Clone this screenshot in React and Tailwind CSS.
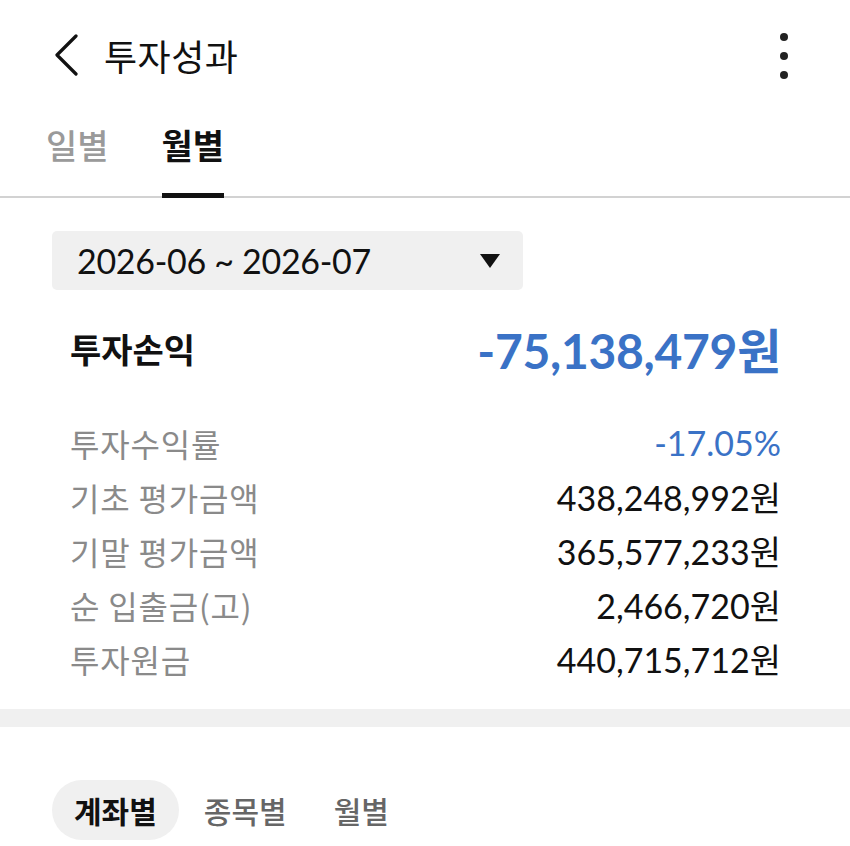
import React from 'react';

const KR = { fontFamily: "'Noto Sans CJK KR', 'Noto Sans', sans-serif" };
const NUM = { fontFamily: "Lato, 'Noto Sans CJK KR', sans-serif" };

const rows = [
  { label: '투자수익률', value: '-17.05%', blue: true },
  { label: '기초 평가금액', value: '438,248,992원' },
  { label: '기말 평가금액', value: '365,577,233원' },
  { label: '순 입출금(고)', value: '2,466,720원' },
  { label: '투자원금', value: '440,715,712원' },
];

export default function App() {
  return (
    <div className="w-[850px] h-[846px] bg-white overflow-hidden text-[#111]" style={KR}>
      {/* header */}
      <div className="h-[110px] flex items-center pl-[52px] pr-[62px]">
        <svg width="30" height="42" viewBox="0 0 30 42" className="shrink-0">
          <polyline points="24,2 5,21 24,40" fill="none" stroke="#111" strokeWidth="3.2" strokeLinecap="round" strokeLinejoin="round" />
        </svg>
        <h1 className="ml-[22px] text-[36px] leading-none font-normal tracking-[0.5px]">투자성과</h1>
        <div className="ml-auto flex flex-col gap-[11px] items-center pt-[2px]">
          <span className="w-[8px] h-[8px] rounded-full bg-[#222]" />
          <span className="w-[8px] h-[8px] rounded-full bg-[#222]" />
          <span className="w-[8px] h-[8px] rounded-full bg-[#222]" />
        </div>
      </div>

      {/* period tabs */}
      <div className="h-[88px] flex gap-[53px] pl-[46px] border-b-2 border-[#d2d2d2]">
        <div className="flex flex-col justify-between -mb-[2px]">
          <span className="pt-[14px] text-[34px] leading-[42px] font-medium text-[#9a9a9a]">일별</span>
          <span className="h-[5px]" />
        </div>
        <div className="flex flex-col justify-between -mb-[2px]">
          <span className="pt-[14px] text-[34px] leading-[42px] font-bold text-[#111]">월별</span>
          <span className="h-[5px] bg-[#111]" />
        </div>
      </div>

      {/* date range */}
      <div className="mt-[33px] mx-[52px] w-[471px] h-[59px] rounded-[5px] bg-[#f0f0f0] flex items-center pl-[25px] pr-[23px]">
        <span className="text-[34px] leading-none text-[#111] tracking-[-0.3px]" style={NUM}>2026-06 ~ 2026-07</span>
        <svg width="20" height="14" viewBox="0 0 20 14" className="ml-auto">
          <polygon points="0,0 20,0 10,14" fill="#111" />
        </svg>
      </div>

      {/* summary */}
      <div className="pl-[70px] pr-[69px]">
        <div className="mt-[30px] h-[58px] flex items-center justify-between">
          <span className="text-[34px] font-bold leading-none">투자손익</span>
          <span className="text-[48px] font-bold leading-none text-[#3a72c6] tracking-[-0.3px]" style={NUM}>
            -75,138,479<span style={KR}>원</span>
          </span>
        </div>
        <div className="mt-[38px]">
          {rows.map((r) => (
            <div key={r.label} className="h-[54px] flex items-center justify-between">
              <span className="text-[32px] leading-none text-[#8a8a8a] tracking-[0.8px]">{r.label}</span>
              <span
                className={`text-[34px] leading-none ${r.blue ? 'text-[#3a72c6]' : 'text-[#111]'}`}
                style={NUM}
              >
                {r.value.endsWith('원') ? (
                  <>
                    {r.value.slice(0, -1)}
                    <span style={KR}>원</span>
                  </>
                ) : (
                  r.value
                )}
              </span>
            </div>
          ))}
        </div>
      </div>

      {/* divider band */}
      <div className="mt-[23px] h-[18px] bg-[#f0f0f0]" />

      {/* category tabs */}
      <div className="mt-[53px] pl-[52px] flex gap-[3px]">
        <span className="h-[60px] px-[22px] rounded-full bg-[#f0f0f0] flex items-center text-[30px] font-bold text-[#111]">계좌별</span>
        <span className="h-[60px] px-[22px] rounded-full flex items-center text-[30px] font-medium text-[#666]">종목별</span>
        <span className="h-[60px] px-[22px] rounded-full flex items-center text-[30px] font-medium text-[#666]">월별</span>
      </div>
    </div>
  );
}
